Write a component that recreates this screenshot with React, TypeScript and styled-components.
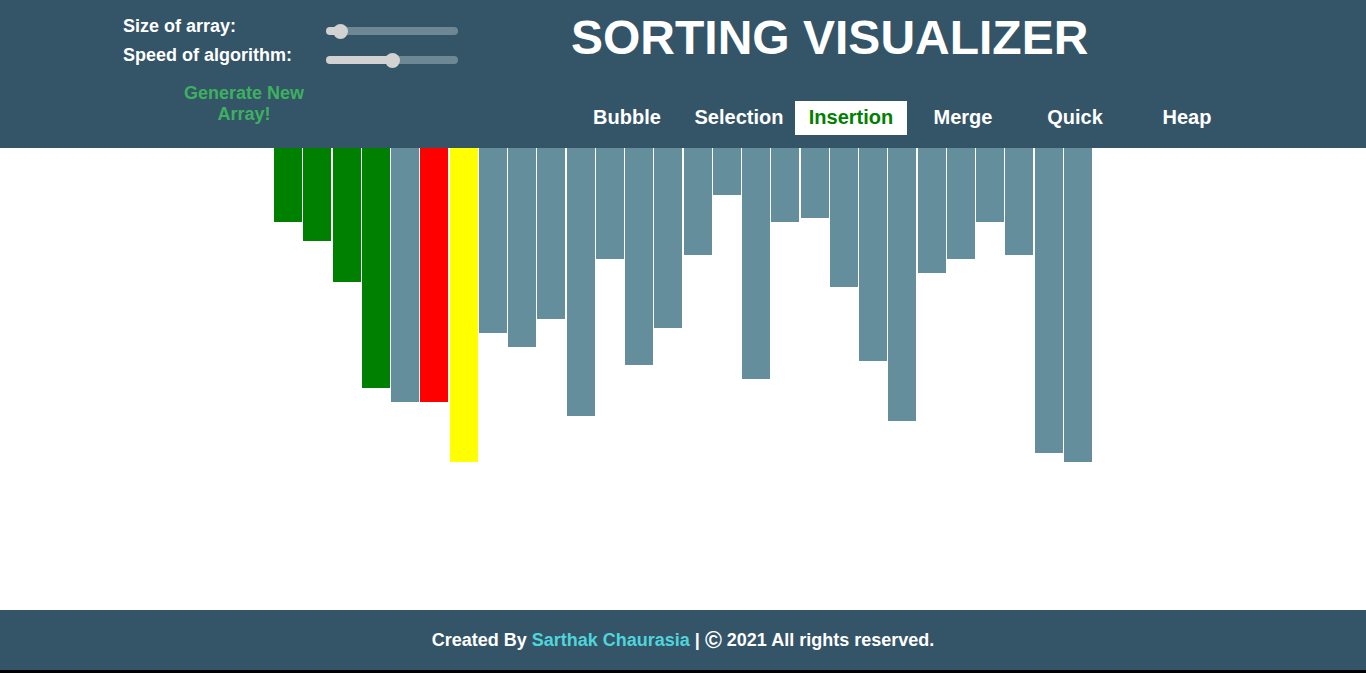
import React, { useState } from "react";
import styled, { createGlobalStyle } from "styled-components";

const Global = createGlobalStyle`
  html, body { margin: 0; padding: 0; background: #000; }
  body { font-family: "Liberation Sans", Arial, sans-serif; }
  * { box-sizing: border-box; }
`;

const Page = styled.div`
  display: flex;
  flex-direction: column;
  height: 670px;
  background: #fff;
`;

const Header = styled.header`
  height: 148px;
  background: #345468;
  display: flex;
  flex-direction: row;
  color: #fff;
`;

const Controls = styled.div`
  width: 571px;
  padding: 12px 0 0 123px;
  display: flex;
  flex-direction: column;
`;

const ControlRow = styled.div`
  display: flex;
  align-items: center;
  height: 29px;
`;

const Label = styled.label`
  width: 203px;
  font-size: 18px;
  font-weight: bold;
  line-height: 29px;
  color: #fff;
`;

const Range = styled.input`
  -webkit-appearance: none;
  appearance: none;
  width: 132px;
  height: 8px;
  margin: 9px 0 0 0;
  border-radius: 4px;
  outline: none;
  &::-webkit-slider-thumb {
    -webkit-appearance: none;
    appearance: none;
    width: 15px;
    height: 15px;
    border-radius: 50%;
    background: #d2d2d2;
    border: none;
    cursor: pointer;
  }
`;

const GenerateButton = styled.button`
  width: 140px;
  margin: 13px 0 0 51px;
  padding: 0;
  background: transparent;
  border: none;
  color: #3db15f;
  font-family: "Liberation Sans", Arial, sans-serif;
  font-size: 18px;
  font-weight: bold;
  line-height: 21px;
  text-align: center;
  cursor: pointer;
`;

const RightPanel = styled.div`
  display: flex;
  flex-direction: column;
  align-items: flex-start;
`;

const Title = styled.h1`
  margin: 14px 0 0 0;
  font-size: 48px;
  line-height: 48px;
  font-weight: bold;
  color: #fff;
  white-space: nowrap;
`;

const Nav = styled.nav`
  display: flex;
  margin-top: 39px;
`;

const NavButton = styled.button<{ $active?: boolean }>`
  width: 112px;
  height: 34px;
  padding: 0 0 2px 0;
  border: none;
  background: ${(p) => (p.$active ? "#fff" : "transparent")};
  color: ${(p) => (p.$active ? "#008000" : "#fff")};
  font-family: "Liberation Sans", Arial, sans-serif;
  font-size: 20px;
  font-weight: bold;
  line-height: 32px;
  cursor: pointer;
`;

const Main = styled.main`
  flex: 1;
  display: flex;
  justify-content: center;
  align-items: flex-start;
  background: #fff;
`;

const Bars = styled.div`
  display: flex;
  gap: 1.2px;
  width: 818px;
`;

const Bar = styled.div<{ $state: "sorted" | "compare" | "key" | "idle" }>`
  flex: 1;
  background: ${(p) =>
    p.$state === "sorted"
      ? "#008000"
      : p.$state === "compare"
      ? "#ff0000"
      : p.$state === "key"
      ? "#ffff00"
      : "#648e9c"};
`;

const Footer = styled.footer`
  height: 60px;
  background: #345468;
  display: flex;
  align-items: center;
  justify-content: center;
  color: #fff;
  font-size: 18px;
  font-weight: bold;
  white-space: pre;
`;

const Author = styled.span`
  color: #4fd5da;
`;

const Copy = styled.span`
  font-size: 23px;
  font-weight: bold;
  line-height: 18px;
`;

const heights = [
  74, 93, 134, 240, 254, 254, 314, 185, 199, 171, 268, 111, 217, 180, 107, 47,
  231, 74, 70, 139, 213, 273, 125, 111, 74, 107, 305, 314,
];

const stateOf = (i: number): "sorted" | "compare" | "key" | "idle" => {
  if (i < 4) return "sorted";
  if (i === 5) return "compare";
  if (i === 6) return "key";
  return "idle";
};

const algorithms = ["Bubble", "Selection", "Insertion", "Merge", "Quick", "Heap"];

export default function App() {
  const [size, setSize] = useState(6);
  const [speed, setSpeed] = useState(50);
  const [algo, setAlgo] = useState("Insertion");

  const fill = (v: number) => {
    const px = 7.5 + (v / 100) * 117;
    return `linear-gradient(to right, #d2d2d2 0px, #d2d2d2 ${px}px, #6d8795 ${px}px, #6d8795 100%)`;
  };

  return (
    <>
      <Global />
      <Page>
        <Header>
          <Controls>
            <ControlRow>
              <Label>Size of array:</Label>
              <Range
                type="range"
                min={0}
                max={100}
                value={size}
                onChange={(e) => setSize(Number(e.target.value))}
                style={{ background: fill(size) }}
              />
            </ControlRow>
            <ControlRow>
              <Label>Speed of algorithm:</Label>
              <Range
                type="range"
                min={0}
                max={100}
                value={speed}
                onChange={(e) => setSpeed(Number(e.target.value))}
                style={{ background: fill(speed) }}
              />
            </ControlRow>
            <GenerateButton>Generate New Array!</GenerateButton>
          </Controls>
          <RightPanel>
            <Title>SORTING VISUALIZER</Title>
            <Nav>
              {algorithms.map((a) => (
                <NavButton key={a} $active={a === algo} onClick={() => setAlgo(a)}>
                  {a}
                </NavButton>
              ))}
            </Nav>
          </RightPanel>
        </Header>
        <Main>
          <Bars>
            {heights.map((h, i) => (
              <Bar key={i} $state={stateOf(i)} style={{ height: h }} />
            ))}
          </Bars>
        </Main>
        <Footer>
          {"Created By "}
          <Author>Sarthak Chaurasia</Author>
          {" | "}
          <Copy>©</Copy>
          {" 2021 All rights reserved."}
        </Footer>
      </Page>
    </>
  );
}
